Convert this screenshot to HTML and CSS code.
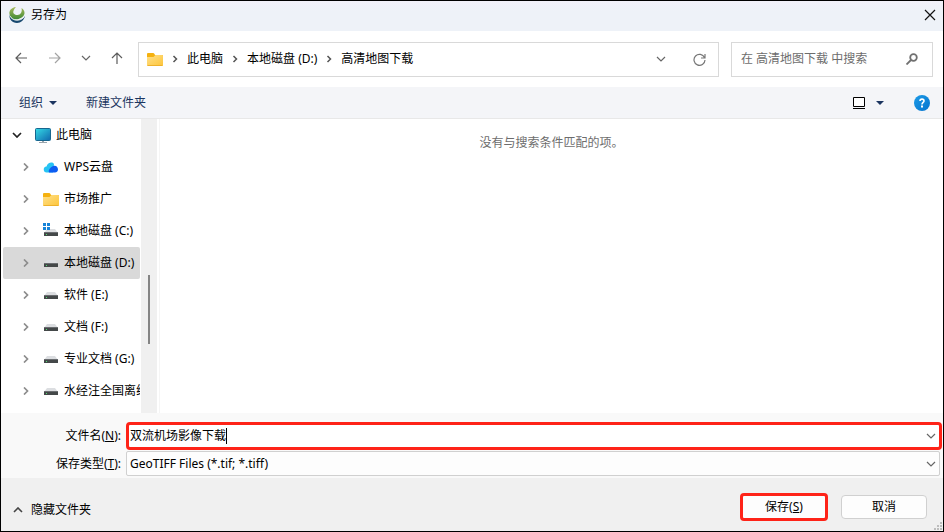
FILE: index.html
```html
<!DOCTYPE html>
<html lang="zh-CN">
<head>
  <meta charset="UTF-8">
  <title>另存为</title>
  <link rel="stylesheet" href="styles.css">
</head>
<body>
  <!-- shared icons -->
  <svg class="defs" width="0" height="0" aria-hidden="true">
    <linearGradient id="gFolder" x1="0" y1="0" x2="1" y2="1">
      <stop offset="0" stop-color="#ffe08a"/><stop offset="1" stop-color="#fdc53a"/>
    </linearGradient>
    <linearGradient id="gScreen" x1="0" y1="0" x2="1" y2="1">
      <stop offset="0" stop-color="#35dbe6"/><stop offset="1" stop-color="#1068ae"/>
    </linearGradient>
    <linearGradient id="gHelp" x1="0" y1="0" x2="1" y2="1">
      <stop offset="0" stop-color="#1c9be8"/><stop offset="1" stop-color="#0674cd"/>
    </linearGradient>
    <linearGradient id="gLogo" x1="0" y1="0" x2="0" y2="1">
      <stop offset="0" stop-color="#a9b95a"/><stop offset="1" stop-color="#3f8a35"/>
    </linearGradient>
    <symbol id="folder" viewBox="0 0 16 14">
      <path d="M0 2Q0 1 1 1h5q1 0 1.500 1l.5 1H15q1 0 1 1v3H0z" fill="#f5b10f"/>
      <path d="M0 5h6.500L8.500 3H15q1 0 1 1v9q0 1-1 1H1q-1 0-1-1z" fill="url(#gFolder)"/>
      <path d="M.5 13.500h15" stroke="#eeb12b"/>
    </symbol>
    <symbol id="drive" viewBox="0 0 14 7">
      <path d="M3 0h8l3 4H0z" fill="#dcdee1"/>
      <rect y="3" width="14" height="4" rx=".5" fill="#444849"/>
      <rect y="3" width="14" height="1" fill="#6a6d70"/>
      <rect x="2" y="5" width="1" height="1" fill="#4fe070"/>
    </symbol>
    <symbol id="right" viewBox="0 0 6 8">
      <path d="M1.500 1 4.500 4 1.500 7" fill="none" stroke="currentColor" stroke-width="1.500"/>
    </symbol>
    <symbol id="treeRight" viewBox="0 0 6 8">
      <path d="M1 0.500 4.500 4 1 7.500" fill="none" stroke="currentColor" stroke-width="1.700"/>
    </symbol>
    <symbol id="down" viewBox="0 0 10 6">
      <path d="M1 1l4 4 4-4" fill="none" stroke="currentColor" stroke-width="1.200"/>
    </symbol>
    <symbol id="caretDown" viewBox="0 0 8 4">
      <path d="M0 0h8L4 4z" fill="currentColor"/>
    </symbol>
  </svg>

  <div class="dialog">
    <header class="titlebar">
      <svg class="logo" width="16" height="16" viewBox="0 0 16 16">
        <path d="M.5 8C0 12 3 16 8 16c4 0 7-3 8-7-2 4-7 5-10 4C3 12 1 10 .5 8z" fill="#17486f"/>
        <path d="M7 0C2 .5 0 4 .5 7c.5 4 5 6 9 5 3-1 6-3 6-6 0-2-1-4-3-5 1 4-1 7-4 7-3 0-5-2-4-4C5 2 6 1 7 0z" fill="url(#gLogo)"/>
        <path d="M1 9c2 5 10 6 14 1" fill="none" stroke="#eef4ee" stroke-width=".8"/>
      </svg>
      <h1>另存为</h1>
      <button class="icon-btn close" aria-label="关闭">
        <svg width="12" height="12" viewBox="0 0 12 12"><path d="M1 1l10 10M11 1L1 11" stroke="#111" stroke-width="1.200"/></svg>
      </button>
    </header>

    <nav class="navbar">
      <div class="nav-buttons">
        <button class="icon-btn" aria-label="后退">
          <svg width="13" height="12" viewBox="0 0 13 12"><path d="M6 1L1 6l5 5M1 6h11" fill="none" stroke="#5c5c5c" stroke-width="1.200"/></svg>
        </button>
        <button class="icon-btn" aria-label="前进">
          <svg width="13" height="12" viewBox="0 0 13 12"><path d="M7 1l5 5-5 5M12 6H1" fill="none" stroke="#a3a3a3" stroke-width="1.200"/></svg>
        </button>
        <button class="icon-btn" aria-label="最近位置">
          <svg class="gray" width="10" height="6"><use href="#down"/></svg>
        </button>
        <button class="icon-btn" aria-label="上移">
          <svg width="12" height="12" viewBox="0 0 12 12"><path d="M1 6l5-5 5 5M6 1v11" fill="none" stroke="#5c5c5c" stroke-width="1.200"/></svg>
        </button>
      </div>
      <div class="address">
        <svg width="16" height="14"><use href="#folder"/></svg>
        <svg class="sep" width="6" height="8"><use href="#right"/></svg>
        <a href="#">此电脑</a>
        <svg class="sep" width="6" height="8"><use href="#right"/></svg>
        <a href="#">本地磁盘 (D:)</a>
        <svg class="sep" width="6" height="8"><use href="#right"/></svg>
        <a href="#">高清地图下载</a>
        <div class="address-tools">
          <button class="icon-btn" aria-label="展开地址">
            <svg class="gray" width="10" height="6"><use href="#down"/></svg>
          </button>
          <button class="icon-btn" aria-label="刷新">
            <svg width="13" height="13" viewBox="0 0 13 13"><path d="M11.500 4.500A5.500 5.500 0 1 0 12 7M12 1v4H8" fill="none" stroke="#777" stroke-width="1.200"/></svg>
          </button>
        </div>
      </div>
      <div class="search">
        <input type="search" aria-label="搜索" placeholder="在 高清地图下载 中搜索">
        <svg width="12" height="12" viewBox="0 0 12 12"><circle cx="7.500" cy="4.500" r="3.300" fill="none" stroke="#707070" stroke-width="1.800"/><path d="M5 7L.5 11.500" stroke="#707070" stroke-width="1.800"/></svg>
      </div>
    </nav>

    <div class="toolbar">
      <button class="tool">组织 <svg width="8" height="4"><use href="#caretDown"/></svg></button>
      <button class="tool">新建文件夹</button>
      <div class="toolbar-right">
        <button class="tool" aria-label="视图">
          <svg width="12" height="12" viewBox="0 0 12 12"><path d="M.5.500h11v9H.5z" fill="#fff" stroke="#000"/><path d="M0 11.500h12" stroke="#000"/></svg>
        </button>
        <button class="tool" aria-label="更多选项"><svg width="8" height="4"><use href="#caretDown"/></svg></button>
        <button class="tool help" aria-label="帮助">
          <svg width="16" height="16" viewBox="0 0 16 16"><circle cx="8" cy="8" r="8" fill="url(#gHelp)"/><path d="M6 6c0-2.500 4-2.500 4 0 0 1.500-2 1.500-2 3.500" fill="none" stroke="#fff" stroke-width="1.600"/><rect x="7" y="10.500" width="2" height="2" fill="#fff"/></svg>
        </button>
      </div>
    </div>

    <main class="content">
      <ul class="tree">
        <li class="node root">
          <svg class="arrow" width="10" height="6" viewBox="0 0 10 6"><path d="M1 1l4 4 4-4" fill="none" stroke="currentColor" stroke-width="1.700"/></svg>
          <svg class="icon" width="16" height="15" viewBox="0 0 16 15"><path d="M7 12h2v2H7zM4 14h8v1H4z" fill="#9aa5ad"/><rect x=".5" y=".5" width="15" height="12" rx="1" fill="url(#gScreen)" stroke="#17668f"/></svg>
          <span>此电脑</span>
        </li>
        <li class="node">
          <svg class="arrow" width="6" height="8"><use href="#treeRight"/></svg>
          <svg class="icon" width="16" height="14" viewBox="0 0 16 14"><path d="M4 12.500a3 3 0 0 1-.5-6C4.500 3 9 1 11 4l-1 8.500z" fill="#27c3f3"/><path d="M6 12.500c-1-2 1-5 4-6.500 2.500-1 5 .5 5 3.500 0 2-1.500 3-3 3z" fill="#0d5df2"/></svg>
          <span>WPS云盘</span>
        </li>
        <li class="node">
          <svg class="arrow" width="6" height="8"><use href="#treeRight"/></svg>
          <svg class="icon" width="16" height="14"><use href="#folder"/></svg>
          <span>市场推广</span>
        </li>
        <li class="node">
          <svg class="arrow" width="6" height="8"><use href="#treeRight"/></svg>
          <svg class="icon" width="16" height="16" viewBox="0 0 16 16"><use href="#drive" x="1" y="6" width="14" height="7"/><path d="M0 0h3v3H0zM4 0h3v3H4zM0 4h3v3H0zM4 4h3v3H4z" fill="#1683d8"/></svg>
          <span>本地磁盘 (C:)</span>
        </li>
        <li class="node selected">
          <svg class="arrow" width="6" height="8"><use href="#treeRight"/></svg>
          <svg class="icon" width="16" height="8" viewBox="0 0 16 8"><use href="#drive" x="1" y="1" width="14" height="7"/></svg>
          <span>本地磁盘 (D:)</span>
        </li>
        <li class="node">
          <svg class="arrow" width="6" height="8"><use href="#treeRight"/></svg>
          <svg class="icon" width="16" height="8" viewBox="0 0 16 8"><use href="#drive" x="1" y="1" width="14" height="7"/></svg>
          <span>软件 (E:)</span>
        </li>
        <li class="node">
          <svg class="arrow" width="6" height="8"><use href="#treeRight"/></svg>
          <svg class="icon" width="16" height="8" viewBox="0 0 16 8"><use href="#drive" x="1" y="1" width="14" height="7"/></svg>
          <span>文档 (F:)</span>
        </li>
        <li class="node">
          <svg class="arrow" width="6" height="8"><use href="#treeRight"/></svg>
          <svg class="icon" width="16" height="8" viewBox="0 0 16 8"><use href="#drive" x="1" y="1" width="14" height="7"/></svg>
          <span>专业文档 (G:)</span>
        </li>
        <li class="node">
          <svg class="arrow" width="6" height="8"><use href="#treeRight"/></svg>
          <svg class="icon" width="16" height="8" viewBox="0 0 16 8"><use href="#drive" x="1" y="1" width="14" height="7"/></svg>
          <span>水经注全国离线</span>
        </li>
      </ul>
      <div class="scrollbar"><div class="thumb"></div></div>
      <section class="files">
        <p>没有与搜索条件匹配的项。</p>
      </section>
    </main>

    <form class="save-form" id="saveForm">
      <label for="fileName">文件名(<u>N</u>):</label>
      <div class="field highlight">
        <input type="text" id="fileName" value="双流机场影像下载" autocomplete="off">
        <span class="text-cursor"></span>
        <svg class="gray" width="10" height="6"><use href="#down"/></svg>
      </div>
      <label for="fileType">保存类型(<u>T</u>):</label>
      <div class="field">
        <select id="fileType">
          <option>GeoTIFF Files (*.tif; *.tiff)</option>
        </select>
        <svg class="gray" width="10" height="6"><use href="#down"/></svg>
      </div>
    </form>

    <footer class="footer">
      <button class="hide-folders">
        <svg width="10" height="6" viewBox="0 0 10 6"><path d="M1 5l4-4 4 4" fill="none" stroke="#444" stroke-width="1.600"/></svg>
        隐藏文件夹
      </button>
      <div class="actions">
        <button class="btn primary" type="submit" form="saveForm">保存(<u>S</u>)</button>
        <button class="btn" type="button">取消</button>
      </div>
      <svg class="grip" width="8" height="8" viewBox="0 0 8 8"><path d="M6 0h2v2H6zM3 3h2v2H3zM6 3h2v2H6zM0 6h2v2H0zM3 6h2v2H3zM6 6h2v2H6z" fill="#bdbdbd"/></svg>
    </footer>
  </div>
</body>
</html>
```

FILE: styles.css
```css
* {
  box-sizing: border-box;
}
body {
  margin: 0;
  font-family: "Noto Sans", "Noto Sans CJK SC", sans-serif;
  font-size: 12px;
  line-height: 18px;
  color: #000;
  background: #000;
}
svg {
  display: block;
  flex: none;
}
.defs {
  position: absolute;
}
button, input, select {
  font: inherit;
  color: inherit;
  border: none;
  background: none;
  padding: 0;
  margin: 0;
  outline: none;
}
.dialog {
  display: flex;
  flex-direction: column;
  height: 100vh;
  border: 1px solid #000;
  background: #fff;
}
.gray {
  color: #666;
}
.icon-btn {
  display: flex;
  align-items: center;
  justify-content: center;
}

/* title bar */
.titlebar {
  display: flex;
  align-items: center;
  height: 30px;
  padding: 0 7px 2px 8px;
  gap: 6px;
  background: linear-gradient(#f2f1fa, #eef2f8 10px);
}
.titlebar h1 {
  margin: 0;
  font-size: 12px;
  font-weight: 400;
}
.close {
  margin-left: auto;
}

/* navigation */
.navbar {
  display: flex;
  align-items: center;
  height: 56px;
  padding: 0 10px 0 14px;
  gap: 12px;
}
.nav-buttons {
  display: flex;
  width: 108px;
  margin-right: 3px;
  padding-bottom: 2px;
  justify-content: space-between;
  align-items: center;
}
.address {
  display: flex;
  align-items: center;
  flex: 1;
  height: 35px;
  padding: 0 12px 0 8px;
  gap: 9px;
  border: 1px solid #d9d9d9;
}
.address a {
  color: #000;
  text-decoration: none;
}
.sep {
  color: #555;
}
.address-tools {
  display: flex;
  gap: 27px;
  margin-left: auto;
}
.search {
  display: flex;
  align-items: center;
  width: 202px;
  height: 35px;
  padding: 0 14px 0 9px;
  border: 1px solid #d9d9d9;
}
.search input {
  flex: 1;
  min-width: 0;
}
.search input::placeholder {
  color: #6d6d6d;
}

/* toolbar */
.toolbar {
  display: flex;
  align-items: center;
  height: 32px;
  padding: 0 13px 0 18px;
  gap: 29px;
  background: #f4f5f8;
  border-bottom: 1px solid #e8e8e8;
}
.tool {
  display: flex;
  align-items: center;
  gap: 6px;
  color: #1b3560;
}
.toolbar-right {
  display: flex;
  align-items: center;
  gap: 11px;
  margin-left: auto;
}
.help {
  margin-left: 19px;
}

/* content */
.content {
  display: flex;
  flex: 1;
  min-height: 0;
}
.tree {
  width: 140px;
  margin: 0;
  padding: 0 1px 0 2px;
  list-style: none;
  overflow: hidden;
}
.node {
  display: flex;
  align-items: center;
  height: 32px;
  padding-left: 20px;
  border-radius: 2px;
  white-space: nowrap;
  overflow: hidden;
}
.node .arrow {
  color: #8c8c8c;
}
.node .icon {
  margin: 0 5px 0 14px;
}
.node.root {
  padding-left: 9px;
}
.node.root .arrow {
  color: #222;
}
.node.root .icon {
  margin-left: 13px;
}
.node.selected {
  background: #d9d9d9;
}
.scrollbar {
  display: flex;
  flex-direction: column;
  justify-content: flex-end;
  align-items: center;
  width: 16px;
  padding-bottom: 69px;
  background: #f0f0f0;
}
.thumb {
  width: 2px;
  height: 69px;
  background: #858585;
}
.files {
  flex: 1;
  margin-left: 2px;
  border-left: 1px solid #f5f5f5;
  text-align: center;
  color: #6d6d6d;
}
.files p {
  margin: 15px 0;
}

/* file name and type */
.save-form {
  display: grid;
  grid-template-columns: 120px 1fr;
  column-gap: 5px;
  row-gap: 1px;
  align-items: center;
  padding: 9px 3px 2px 0;
  background: #f9f9f9;
}
.save-form label {
  text-align: right;
}
.field {
  position: relative;
  display: flex;
  align-items: center;
  height: 25px;
  padding: 0 3px;
  border: 1px solid #d0d0d0;
  border-radius: 2px;
  background: #fdfdfd;
}
.field input, .field select {
  flex: 1;
  min-width: 0;
  appearance: none;
}
.field.highlight {
  height: 28px;
  margin-right: -2px;
  padding: 0 3px 0 1px;
  border: 3px solid #fe2318;
  border-radius: 4px;
  background: #fff;
}
.text-cursor {
  position: absolute;
  left: 97px;
  width: 1px;
  height: 16px;
  background: #000;
}

/* footer */
.footer {
  position: relative;
  display: flex;
  align-items: center;
  justify-content: space-between;
  height: 53px;
  padding: 4px 16px 0 12px;
  background: #f0f0f0;
}
.hide-folders {
  display: flex;
  align-items: center;
  gap: 8px;
  padding-top: 6px;
}
.actions {
  display: flex;
  align-items: center;
  gap: 13px;
}
.btn {
  width: 86px;
  height: 24px;
  border: 1px solid #d0d0d0;
  border-radius: 4px;
  background: #fdfdfd;
}
.btn.primary {
  width: 88px;
  height: 28px;
  border: 3px solid #fe2318;
}
.grip {
  position: absolute;
  right: 1px;
  bottom: 1px;
}
```
